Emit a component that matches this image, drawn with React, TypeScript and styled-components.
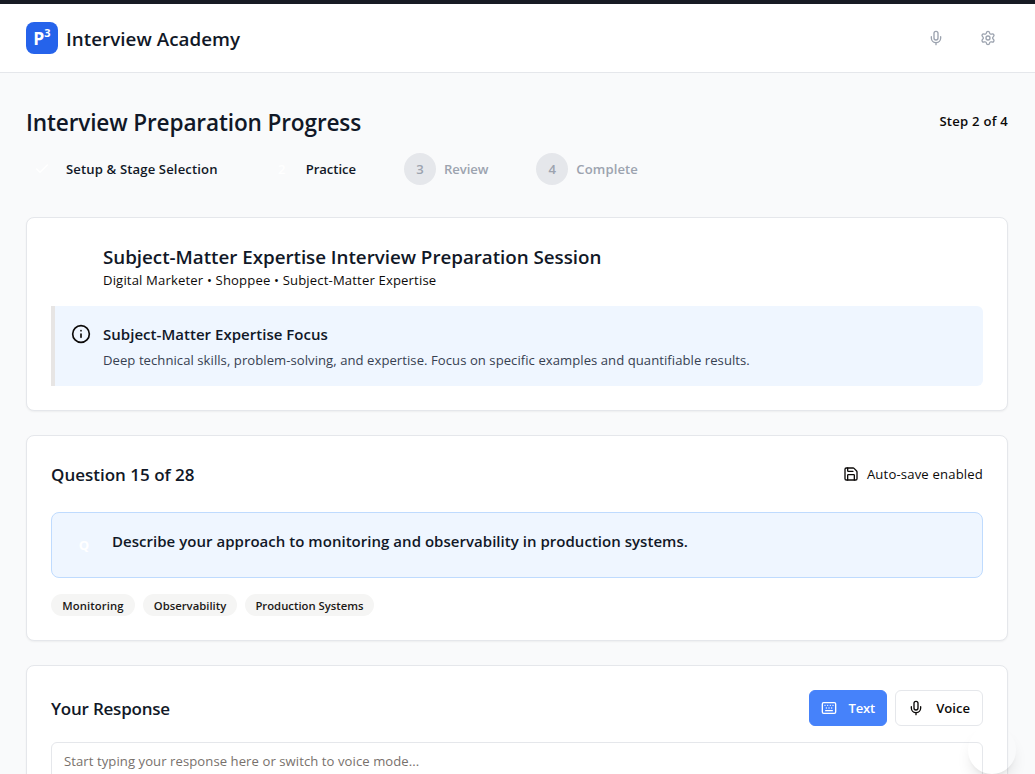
import React from "react";
import styled, { createGlobalStyle } from "styled-components";
import { Mic, Settings, Info, Save, Keyboard, Check } from "lucide-react";

const GlobalStyle = createGlobalStyle`
  * { box-sizing: border-box; }
  body {
    margin: 0;
    color: #0c0a09;
    font-family: "Segoe UI", "Open Sans", "Noto Sans", sans-serif;
    font-size: 13.1px;
    line-height: 20px;
  }
  h1, h2, h3, p { margin: 0; font-weight: 600; }
`;

const Page = styled.div`
  height: 100vh;
  overflow: hidden;
  background: #f9fafb;
`;

const Label = styled.span<{ $track?: number }>`
  letter-spacing: ${(p) => p.$track ?? 0}px;
  white-space: nowrap;
`;

const Header = styled.header`
  height: 73px;
  border-top: 4px solid #181b24;
  border-bottom: 1px solid #e5e7eb;
  background: #fff;
  display: flex;
  align-items: center;
  justify-content: space-between;
  padding: 0 39px 0 26px;
`;

const Brand = styled.div`
  display: flex;
  align-items: center;
  gap: 8px;
  color: #111827;
`;

const BrandName = styled.div`
  padding-top: 2px;
  font-size: 18.8px;
  font-weight: 600;
  line-height: 28px;
`;

const Logo = styled.div`
  width: 32px;
  height: 32px;
  border-radius: 8px;
  background: #2563eb;
  color: #fff;
  display: flex;
  justify-content: center;
  font-size: 17.5px;
  font-weight: 700;
  line-height: 32px;
  sup { font-size: 11px; line-height: 22px; }
`;

const HeaderActions = styled.div`
  display: flex;
  gap: 36px;
  color: #9ca3af;
`;

const Main = styled.main`
  padding: 32px 27px 0 26px;
`;

const TitleRow = styled.div`
  display: flex;
  align-items: flex-start;
  justify-content: space-between;
  height: 33px;
`;

const PageTitle = styled.h1`
  padding-top: 2px;
  font-size: 22.6px;
  line-height: 32px;
  color: #111827;
`;

const StepCount = styled.p`
  padding-top: 6px;
`;

const Steps = styled.div`
  display: flex;
  gap: 48px;
  margin-top: 15px;
`;

const Step = styled.div<{ $pending?: boolean }>`
  display: flex;
  align-items: center;
  gap: 8px;
  font-weight: 600;
  color: ${(p) => (p.$pending ? "#9ca3af" : "#111827")};
`;

const StepDot = styled.div<{ $pending?: boolean }>`
  width: 32px;
  height: 32px;
  border-radius: 50%;
  display: flex;
  align-items: center;
  justify-content: center;
  background: ${(p) => (p.$pending ? "#e5e7eb" : "transparent")};
  color: ${(p) => (p.$pending ? "#9ca3af" : "#fff")};
`;

const Card = styled.section<{ $height: number; $top?: number }>`
  height: ${(p) => p.$height}px;
  margin-top: ${(p) => p.$top ?? 24}px;
  padding: 24px;
  border: 1px solid #e5e7eb;
  border-radius: 8px;
  background: #fff;
  box-shadow: 0 1px 2px rgba(0, 0, 0, 0.05);
`;

const SessionHead = styled.div`
  padding: 1px 0 0 52px;
`;

const SessionTitle = styled.h2`
  font-size: 18.8px;
  line-height: 28px;
  color: #111827;
`;

const SessionMeta = styled.p`
  font-weight: 400;
  line-height: 18px;
`;

const FocusNote = styled.div`
  display: flex;
  gap: 12px;
  height: 80px;
  margin-top: 17px;
  padding: 16px;
  border-left: 4px solid #e7e5e4;
  border-radius: 0 6px 6px 0;
  background: #eff6ff;
  svg { margin-top: 2px; }
`;

const FocusTitle = styled.h3`
  font-size: 15px;
  line-height: 24px;
  color: #111827;
`;

const FocusText = styled.p`
  margin-top: 4px;
  font-weight: 400;
  color: #374151;
`;

const CardHead = styled.div`
  display: flex;
  align-items: center;
  justify-content: space-between;
`;

const CardTitle = styled.h2`
  margin: 1px 0 -1px;
  font-size: 17px;
  line-height: 28px;
  color: #111827;
`;

const AutoSave = styled.div`
  display: flex;
  align-items: center;
  gap: 8px;
`;

const Question = styled.div`
  display: flex;
  gap: 12px;
  height: 66px;
  margin-top: 24px;
  padding: 16px;
  border: 1px solid #bfdbfe;
  border-radius: 8px;
  background: #eff6ff;
`;

const QuestionMark = styled.div`
  width: 32px;
  height: 32px;
  display: flex;
  align-items: center;
  justify-content: center;
  font-weight: 700;
  color: #fff;
`;

const QuestionText = styled.p`
  font-size: 15px;
  line-height: 24px;
  color: #111827;
`;

const Tags = styled.div`
  display: flex;
  gap: 8px;
  margin-top: 16px;
`;

const Tag = styled.span<{ $width: number }>`
  width: ${(p) => p.$width}px;
  height: 22px;
  border-radius: 11px;
  background: #f5f5f4;
  text-align: center;
  font-size: 11.3px;
  font-weight: 600;
  line-height: 23px;
  color: #1c1917;
`;

const Modes = styled.div`
  display: flex;
  gap: 8px;
`;

const ModeButton = styled.button<{ $active?: boolean; $width: number }>`
  display: flex;
  align-items: center;
  justify-content: space-between;
  width: ${(p) => p.$width}px;
  height: 36px;
  padding: 0 ${(p) => (p.$active ? 11 : 12)}px;
  border: 1px solid ${(p) => (p.$active ? "#4682fa" : "#e5e7eb")};
  border-radius: 6px;
  background: ${(p) => (p.$active ? "#4682fa" : "#fff")};
  color: ${(p) => (p.$active ? "#fff" : "#0c0a09")};
  font: inherit;
  font-weight: 600;
`;

const Response = styled.textarea`
  display: block;
  width: 100%;
  height: 120px;
  margin-top: 16px;
  padding: 8px 12px;
  border: 1px solid #e5e7eb;
  border-radius: 6px;
  resize: none;
  overflow: hidden;
  background: #fff;
  font: inherit;
  letter-spacing: 0.07px;
  &::placeholder { color: #78716c; opacity: 1; }
`;

const FloatingButton = styled.button`
  position: fixed;
  right: 19px;
  bottom: 0;
  width: 48px;
  height: 48px;
  border: 0;
  border-radius: 50%;
  background: transparent;
  box-shadow: 0 10px 15px -3px rgba(0, 0, 0, 0.1), 0 4px 6px -4px rgba(0, 0, 0, 0.1);
`;

export default function App() {
  return (
    <Page>
      <GlobalStyle />
      <Header>
        <Brand>
          <Logo>P<sup>3</sup></Logo>
          <BrandName><Label $track={0.04}>Interview Academy</Label></BrandName>
        </Brand>
        <HeaderActions>
          <Mic size={16} />
          <Settings size={16} />
        </HeaderActions>
      </Header>
      <Main>
        <TitleRow>
          <PageTitle><Label $track={-0.14}>Interview Preparation Progress</Label></PageTitle>
          <StepCount><Label $track={0.24}>Step 2 of 4</Label></StepCount>
        </TitleRow>
        <Steps>
          <Step><StepDot><Check size={16} /></StepDot><Label $track={0.13}>Setup &amp; Stage Selection</Label></Step>
          <Step><StepDot>2</StepDot><Label $track={-0.03}>Practice</Label></Step>
          <Step $pending><StepDot $pending>3</StepDot><Label $track={-0.09}>Review</Label></Step>
          <Step $pending><StepDot $pending>4</StepDot><Label $track={0.1}>Complete</Label></Step>
        </Steps>
        <Card $height={194} $top={32}>
          <SessionHead>
            <SessionTitle><Label $track={-0.03}>Subject-Matter Expertise Interview Preparation Session</Label></SessionTitle>
            <SessionMeta><Label $track={0.155}>Digital Marketer • Shoppee • Subject-Matter Expertise</Label></SessionMeta>
          </SessionHead>
          <FocusNote>
            <Info size={20} />
            <div>
              <FocusTitle><Label $track={0.03}>Subject-Matter Expertise Focus</Label></FocusTitle>
              <FocusText><Label $track={0.053}>Deep technical skills, problem-solving, and expertise. Focus on specific examples and quantifiable results.</Label></FocusText>
            </div>
          </FocusNote>
        </Card>
        <Card $height={206}>
          <CardHead>
            <CardTitle><Label>Question 15 of 28</Label></CardTitle>
            <AutoSave><Save size={16} /><Label $track={0.17}>Auto-save enabled</Label></AutoSave>
          </CardHead>
          <Question>
            <QuestionMark>Q</QuestionMark>
            <QuestionText><Label $track={0.03}>Describe your approach to monitoring and observability in production systems.</Label></QuestionText>
          </Question>
          <Tags>
            <Tag $width={84}><Label $track={0.1}>Monitoring</Label></Tag>
            <Tag $width={94}><Label>Observability</Label></Tag>
            <Tag $width={129}><Label>Production Systems</Label></Tag>
          </Tags>
        </Card>
        <Card $height={222}>
          <CardHead>
            <CardTitle><Label $track={-0.22}>Your Response</Label></CardTitle>
            <Modes>
              <ModeButton $active $width={78}><Keyboard size={16} /><Label $track={-0.2}>Text</Label></ModeButton>
              <ModeButton $width={88}><Mic size={16} /><Label>Voice</Label></ModeButton>
            </Modes>
          </CardHead>
          <Response placeholder="Start typing your response here or switch to voice mode..." />
        </Card>
      </Main>
      <FloatingButton aria-label="Help" />
    </Page>
  );
}
